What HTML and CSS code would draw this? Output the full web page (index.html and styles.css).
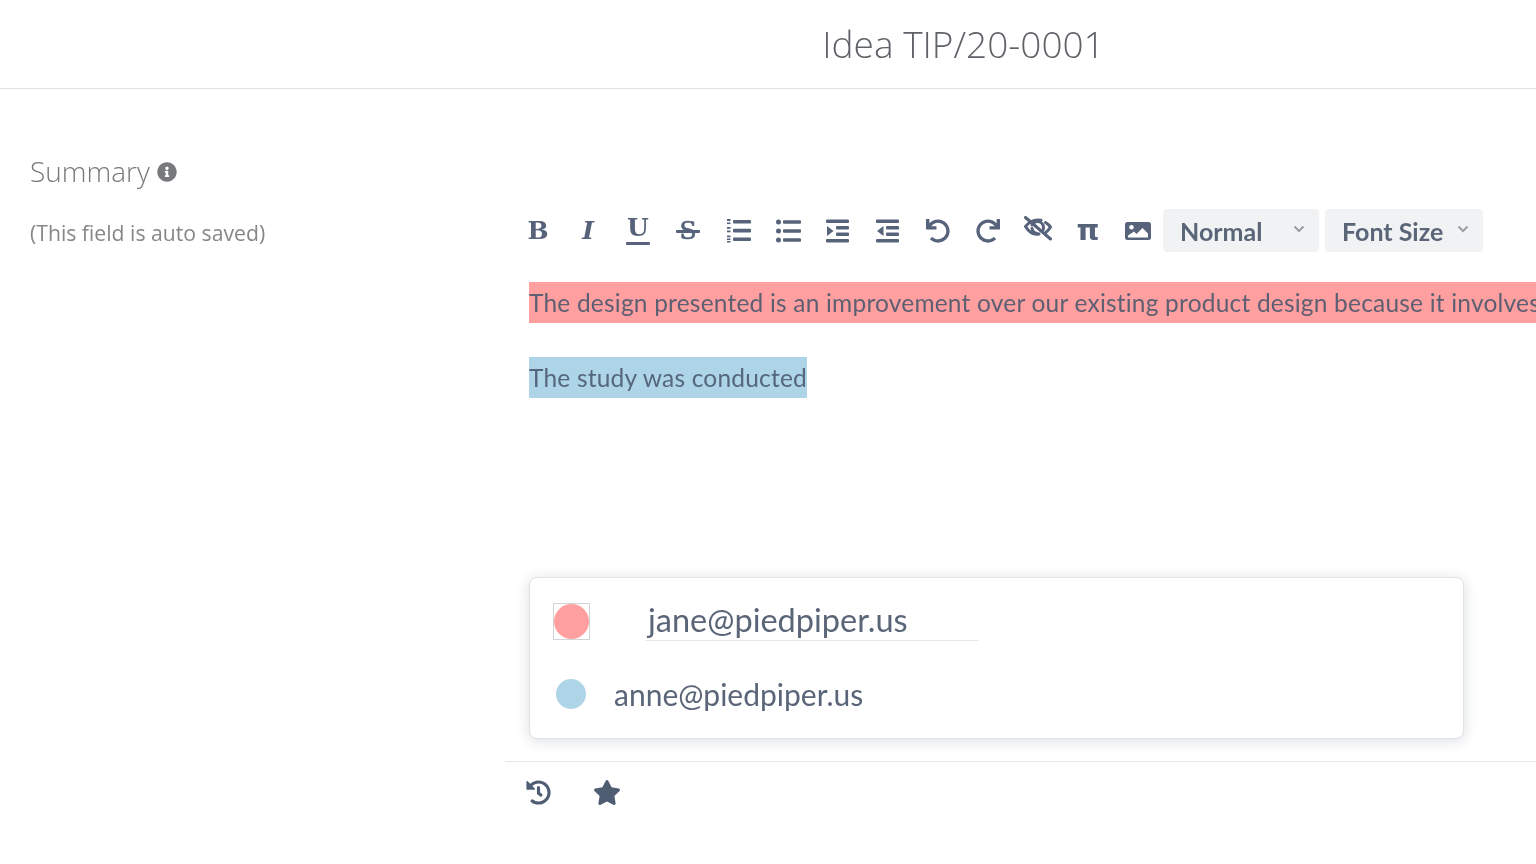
FILE: index.html
```html
<!DOCTYPE html>
<html lang="en">
<head>
<meta charset="utf-8">
<title>Idea TIP/20-0001</title>
<link rel="stylesheet" href="styles.css">
</head>
<body>
<header class="top"><h1 class="title">Idea TIP/20-0001</h1></header>
<main class="page">
  <aside class="side">
    <h2 class="label">Summary
      <svg class="info" viewBox="0 0 512 512"><path d="M256 8C119.043 8 8 119.083 8 256c0 136.997 111.043 248 248 248s248-111.003 248-248C504 119.083 392.957 8 256 8zm0 110c23.196 0 42 18.804 42 42s-18.804 42-42 42-42-18.804-42-42 18.804-42 42-42zm56 254c0 6.627-5.373 12-12 12h-88c-6.627 0-12-5.373-12-12v-24c0-6.627 5.373-12 12-12h12v-64h-12c-6.627 0-12-5.373-12-12v-24c0-6.627 5.373-12 12-12h64c6.627 0 12 5.373 12 12v100h12c6.627 0 12 5.373 12 12v24z"/></svg>
    </h2>
    <p class="note">(This field is auto saved)</p>
  </aside>
  <section class="content">
    <div class="editor">
      <div class="toolbar">
        <span class="tool glyph">B</span>
        <span class="tool glyph italic">I</span>
        <span class="tool glyph under">U</span>
        <span class="tool glyph strike">S</span>
        <span class="tool"><svg class="ico" viewBox="0 0 26 26"><rect x="8" y="2" width="18" height="3.600" rx="1"/><rect x="8" y="10.800" width="18" height="3.600" rx="1"/><rect x="8" y="19.500" width="18" height="3.600" rx="1"/><rect x="2" y="1" width="3.500" height="2"/><rect x="2" y="4.500" width="3.500" height="1.600"/><rect x="2" y="9" width="3.500" height="1.800"/><rect x="2" y="12.500" width="3.500" height="1.800"/><rect x="2" y="17.500" width="3.500" height="1.800"/><rect x="2" y="20.500" width="3.500" height="1.500"/><rect x="2" y="23" width="3.500" height="1.500"/></svg></span>
        <span class="tool"><svg class="ico" viewBox="0 0 26 26"><circle cx="3.500" cy="4" r="2.500"/><circle cx="3.500" cy="13" r="2.500"/><circle cx="3.500" cy="22" r="2.500"/><rect x="8" y="2.200" width="18" height="3.600" rx="1"/><rect x="8" y="11.200" width="18" height="3.600" rx="1"/><rect x="8" y="20.200" width="18" height="3.600" rx="1"/></svg></span>
        <span class="tool"><svg class="ico" viewBox="0 0 26 26"><rect x="1" y="1.500" width="23" height="3.600" rx="1"/><rect x="11" y="8" width="13" height="3.400" rx="1"/><rect x="11" y="14.500" width="13" height="3.400" rx="1"/><rect x="1" y="21" width="23" height="3.600" rx="1"/><path d="M2 8l6.500 5L2 18z"/></svg></span>
        <span class="tool"><svg class="ico" viewBox="0 0 26 26"><rect x="1" y="1.500" width="23" height="3.600" rx="1"/><rect x="11" y="8" width="13" height="3.400" rx="1"/><rect x="11" y="14.500" width="13" height="3.400" rx="1"/><rect x="1" y="21" width="23" height="3.600" rx="1"/><path d="M8.500 8L2 13l6.500 5z"/></svg></span>
        <span class="tool"><svg class="ico sm" viewBox="0 0 512 512"><path d="M212.333 224.333H12c-6.627 0-12-5.373-12-12V12C0 5.373 5.373 0 12 0h48c6.627 0 12 5.373 12 12v78.112C117.773 39.279 184.26 7.47 258.175 8.007c136.906.994 246.448 111.623 246.157 248.532C504.041 393.258 393.12 504 256.333 504c-64.089 0-122.496-24.313-166.51-64.215-5.099-4.622-5.334-12.554-.467-17.42l33.967-33.967c4.474-4.474 11.662-4.717 16.401-.525C170.76 415.336 211.58 432 256.333 432c97.268 0 176-78.716 176-176 0-97.267-78.716-176-176-176-58.496 0-110.28 28.476-142.274 72.333h98.274c6.627 0 12 5.373 12 12v48c0 6.627-5.373 12-12 12z"/></svg></span>
        <span class="tool"><svg class="ico sm flip" viewBox="0 0 512 512"><path d="M212.333 224.333H12c-6.627 0-12-5.373-12-12V12C0 5.373 5.373 0 12 0h48c6.627 0 12 5.373 12 12v78.112C117.773 39.279 184.26 7.47 258.175 8.007c136.906.994 246.448 111.623 246.157 248.532C504.041 393.258 393.12 504 256.333 504c-64.089 0-122.496-24.313-166.51-64.215-5.099-4.622-5.334-12.554-.467-17.42l33.967-33.967c4.474-4.474 11.662-4.717 16.401-.525C170.76 415.336 211.58 432 256.333 432c97.268 0 176-78.716 176-176 0-97.267-78.716-176-176-176-58.496 0-110.28 28.476-142.274 72.333h98.274c6.627 0 12 5.373 12 12v48c0 6.627-5.373 12-12 12z"/></svg></span>
        <span class="tool"><svg class="ico wide" viewBox="0 0 30 26"><path class="line" d="M2.500 10.500C6 6 10 4 15 4c1 0 2 .1 3 .3M22.500 6.500c2 1.200 3.800 2.700 5 4.500-1.500 2.500-3 4.300-5 5.700M16 18c-.7.1-1.300.200-2 .200-4.500 0-8.500-2.700-11.500-7.700"/><path class="line" d="M9 9a6 6 0 0 1 11 5M9 12.500a6 6 0 0 0 5 5"/><path class="line" d="M2.500 1.500L27.500 23"/></svg></span>
        <span class="tool glyph pi">π</span>
        <span class="tool"><svg class="ico" viewBox="0 0 26 26"><path fill-rule="evenodd" d="M2.500 4h21A2.500 2.500 0 0 1 26 6.500v13a2.500 2.500 0 0 1-2.500 2.500h-21A2.500 2.500 0 0 1 0 19.500v-13A2.500 2.500 0 0 1 2.500 4zM6.500 7a2.300 2.300 0 1 0 0 4.600 2.300 2.300 0 0 0 0-4.600zM3 19.500h20v-4l-5.500-5.500-6 6-2.500-2.500-6 4z"/></svg></span>
        <span class="select sel-normal">Normal<svg class="chev" viewBox="0 0 12 8"><path d="M1.500 1.500L6 6l4.500-4.500"/></svg></span>
        <span class="select sel-size">Font Size<svg class="chev" viewBox="0 0 12 8"><path d="M1.500 1.500L6 6l4.500-4.500"/></svg></span>
      </div>
      <div class="doc">
        <p class="para"><span class="mark red">The design presented is an improvement over our existing product design because it involves</span></p>
        <p class="para"><span class="mark blue">The study was conducted</span></p>
      </div>
      <div class="card">
        <div class="row row-jane">
          <span class="swatch"><span class="dot dot-red"></span></span>
          <span class="field">jane@piedpiper.us</span>
        </div>
        <div class="row row-anne">
          <span class="dot dot-blue"></span>
          <span class="person">anne@piedpiper.us</span>
        </div>
      </div>
    </div>
    <div class="foot">
      <svg class="foot-ico" viewBox="0 0 512 512"><path d="M504 255.531c.253 136.64-111.18 248.372-247.82 248.468-59.015.042-113.223-20.53-155.822-54.911-11.077-8.94-11.905-25.541-1.839-35.607l11.267-11.267c8.609-8.609 22.353-9.551 31.891-1.984C173.062 425.135 212.781 440 256 440c101.705 0 184-82.311 184-184 0-101.705-82.311-184-184-184-48.814 0-93.149 18.969-126.068 49.932l50.754 50.754c10.08 10.08 2.941 27.314-11.313 27.314H24c-8.837 0-16-7.163-16-16V38.627c0-14.254 17.234-21.393 27.314-11.314l49.372 49.372C129.209 34.136 189.552 8 256 8c136.81 0 247.747 110.78 248 247.531zm-180.912 78.784l9.823-12.63c8.138-10.463 6.253-25.542-4.21-33.679L288 256.349V152c0-13.255-10.745-24-24-24h-16c-13.255 0-24 10.745-24 24v135.651l65.409 50.874c10.463 8.137 25.541 6.253 33.679-4.21z"/></svg>
      <svg class="foot-ico star" viewBox="0 0 576 512"><path d="M259.3 17.800L194 150.200 47.900 171.500c-26.200 3.800-36.700 36.100-17.700 54.600l105.700 103-25 145.500c-4.500 26.300 23.200 46 46.400 33.700L288 439.600l130.700 68.700c23.200 12.200 50.900-7.400 46.400-33.700l-25-145.500 105.700-103c19-18.500 8.500-50.800-17.700-54.600L382 150.200 316.700 17.800c-11.700-23.600-45.600-23.900-57.400 0z"/></svg>
    </div>
  </section>
</main>
</body>
</html>
```
FILE: styles.css
```css
* { box-sizing: border-box; }
html, body { margin: 0; height: 100%; overflow: hidden; background: #fff; }
body { font-family: "Lato", "Noto Sans", sans-serif; color: #5a6578; filter: blur(.35px); }

.top {
  height: 89px;
  border-bottom: 1px solid #dfe1e4;
  display: flex;
  justify-content: center;
  align-items: center;
  padding: 0 0 2px 391px;
}
.title {
  margin: 0;
  font: 300 37px/1 "Open Sans", sans-serif;
  color: #5f6368;
}

.page { display: flex; }
.side { width: 505px; flex: none; padding: 63px 0 0 30px; }
.label {
  margin: 0;
  display: flex;
  align-items: center;
  gap: 7px;
  font: 300 28px/38px "Open Sans", sans-serif;
  color: #77797c;
}
.info { width: 20px; height: 20px; fill: #77797c; margin-top: 2px; }
.note {
  margin: 29px 0 0;
  font: 400 21.200px/28px "Open Sans", sans-serif;
  color: #85878a;
}

.content { flex: 1; min-width: 0; }
.editor { padding: 120px 0 0 24px; }

.toolbar { display: flex; align-items: center; height: 43px; margin-left: -4px; }
.tool {
  flex: none;
  display: flex;
  justify-content: center;
  align-items: center;
  position: relative;
  margin: 0 -12px;
  width: 74px;
}
.tool:first-child { margin-left: -24px; }
.ico { width: 26px; height: 26px; fill: #56637a; }
.ico.sm { width: 24px; height: 24px; }
.ico.wide { width: 30px; height: 26px; margin-top: -3px; margin-left: -1px; }
.flip { transform: scaleX(-1); }
.line { fill: none; stroke: #56637a; stroke-width: 3; stroke-linecap: round; }
.glyph {
  font: 700 25px/26px "DejaVu Serif", serif;
  color: #56637a;
}
.italic { font-style: italic; }
.under { margin-top: -5px; font-size: 25px; }
.under::after {
  content: "";
  position: absolute;
  left: 25px;
  right: 25px;
  top: 27px;
  height: 3px;
  border-radius: 1px;
  background: #56637a;
}
.strike { font-size: 25px; font-weight: 400; -webkit-text-stroke: .7px #56637a; margin-top: 1px; }
.strike::after {
  content: "";
  position: absolute;
  left: 25px;
  right: 25px;
  top: 12px;
  height: 3px;
  border-radius: 1px;
  background: #56637a;
}
.pi { font: 700 29px/26px "DejaVu Sans", sans-serif; margin-top: -2px; }

.select {
  height: 43px;
  background: #f1f2f4;
  border-radius: 4px;
  display: flex;
  align-items: center;
  justify-content: space-between;
  font-size: 25px;
  font-weight: 700;
  color: #5a6578;
  padding: 0 14px 0 17px;
}
.sel-normal { width: 156px; margin-left: 0; }
.sel-size { width: 158px; margin-left: 6px; }
.chev { width: 12px; height: 8px; margin-top: -4px; fill: none; stroke: #9a9ea6; stroke-width: 2; }

.doc { margin-top: 30px; height: 295px; white-space: nowrap; font-size: 24.500px; }
.para { margin: 0 0 34px; line-height: 41px; height: 41px; }
.mark { display: inline-block; height: 41px; letter-spacing: .2px; }
.red { background: #ff9f9f; color: #5d5f72; }
.blue { background: #aed4e8; color: #55677c; }

.card {
  width: 935px;
  height: 162px;
  background: #fff;
  border: 1px solid #dfe2e7;
  border-radius: 8px;
  box-shadow: 0 2px 14px rgba(60, 70, 90, .18);
  padding: 24px 0 0 23px;
}
.row { display: flex; align-items: center; }
.swatch {
  width: 37px;
  height: 37px;
  border: 1px solid #d2d3d5;
  display: flex;
  align-items: center;
  justify-content: center;
}
.dot { display: block; border-radius: 50%; flex: none; }
.dot-red { width: 35px; height: 35px; background: #ff9f9f; }
.dot-blue { width: 30px; height: 30px; margin-left: 3px; background: #aed4e8; }
.field {
  width: 334px;
  margin-left: 55px;
  padding: 0 0 0 3px;
  height: 39px;
  line-height: 36px;
  font-size: 32.500px;
  border-bottom: 1px solid #e8e9eb;
}
.row-anne { margin-top: 37px; }
.person { margin-left: 28px; font-size: 30px; line-height: 32px; }

.foot {
  margin-top: 22px;
  border-top: 1px solid #e6e8ea;
  display: flex;
  align-items: center;
  padding: 18px 0 0 21px;
}
.foot-ico { width: 25px; height: 25px; fill: #4f5d73; }
.star { width: 28px; margin-left: 42px; }
```
